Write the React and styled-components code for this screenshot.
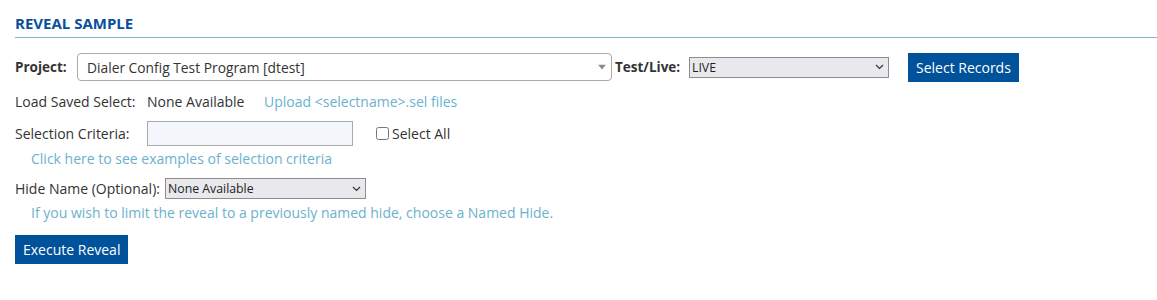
import React from 'react';
import styled, { createGlobalStyle } from 'styled-components';

const GlobalStyle = createGlobalStyle`
    body {
        margin: 0;
        background: #fff;
        font-family: "Open Sans", "Liberation Sans", sans-serif;
        color: #333;
    }
`;

const Page = styled.div`
    padding: 13px 0 0 15px;
    font-size: 14px;
`;

const Title = styled.h2`
    margin: 0;
    padding-bottom: 4px;
    border-bottom: 1px solid #7fb5cb;
    font-size: 15px;
    font-weight: 700;
    color: #0b4f9c;
    line-height: 20px;
`;

const Row = styled.div`
    display: flex;
    align-items: center;
    margin-top: ${(props) => props.top || 0}px;
    padding-left: ${(props) => props.indent || 0}px;
    height: ${(props) => props.h || 20}px;
`;

const Label = styled.span`
    font-weight: ${(props) => (props.bold ? 700 : 400)};
    font-size: ${(props) => (props.bold ? '13.5px' : 'inherit')};
    width: ${(props) => (props.width ? props.width + 'px' : 'auto')};
    flex-shrink: 0;
    white-space: nowrap;
`;

const Link = styled.a`
    color: #6cb1cd;
    text-decoration: none;
    cursor: pointer;
    white-space: nowrap;
`;

const SelectWrap = styled.div`
    position: relative;
    width: ${(props) => props.width}px;
    height: ${(props) => props.height}px;
    margin-left: ${(props) => props.left || 0}px;
    flex-shrink: 0;
`;

const BigSelect = styled.select`
    appearance: none;
    width: 100%;
    height: 100%;
    box-sizing: border-box;
    border: 1px solid #aaa;
    border-radius: 4px;
    background: #fff;
    font-family: inherit;
    font-size: 13.8px;
    color: #333;
    padding: 0 0 0 9px;
`;

const SmallSelect = styled.select`
    appearance: none;
    width: 100%;
    height: 100%;
    box-sizing: border-box;
    border: 1px solid #8d8d8d;
    border-radius: 0;
    background: #e9e9ed;
    font-family: inherit;
    font-size: 12.3px;
    color: #222;
    padding: 0 0 0 2px;
`;

const Arrow = styled.span`
    position: absolute;
    right: ${(props) => props.right}px;
    top: 50%;
    transform: translateY(-50%);
    display: flex;
    pointer-events: none;
`;

const Button = styled.button`
    background: #00529b;
    color: #fff;
    border: none;
    font-family: inherit;
    font-size: 14px;
    height: 29px;
    padding: 0 8px;
    margin-left: ${(props) => props.left || 0}px;
    cursor: pointer;
`;

const TextInput = styled.input`
    width: 206px;
    height: 25px;
    box-sizing: border-box;
    border: 1px solid #aaa;
    background: #f3f7fb;
    margin: 0;
`;

const CheckLabel = styled.label`
    display: flex;
    align-items: center;
    margin-left: 23px;
    gap: 3px;
`;

const Check = styled.input`
    width: 13px;
    height: 13px;
    margin: 0;
`;

const Caret = () => (
    <svg width="8" height="5" viewBox="0 0 8 5"><path d="M0 0h8L4 5z" fill="#888" /></svg>
);

const Chevron = () => (
    <svg width="9" height="6" viewBox="0 0 9 6"><path d="M1 1l3.5 3.5L8 1" fill="none" stroke="#333" strokeWidth="1.2" /></svg>
);

export default function App() {
    return (
        <Page>
            <GlobalStyle />
            <Title>REVEAL SAMPLE</Title>
            <Row top={15} h={28}>
                <Label bold width={62}>Project:</Label>
                <SelectWrap width={535} height={28}>
                    <BigSelect defaultValue="dtest">
                        <option value="dtest">Dialer Config Test Program [dtest]</option>
                    </BigSelect>
                    <Arrow right={6}><Caret /></Arrow>
                </SelectWrap>
                <Label bold width={74} style={{ marginLeft: 3 }}>Test/Live:</Label>
                <SelectWrap width={200} height={21}>
                    <SmallSelect defaultValue="live">
                        <option value="live">LIVE</option>
                    </SmallSelect>
                    <Arrow right={5}><Chevron /></Arrow>
                </SelectWrap>
                <Button left={19}>Select Records</Button>
            </Row>
            <Row top={10} h={20}>
                <Label width={132}>Load Saved Select:</Label>
                <Label width={117}>None Available</Label>
                <Link>Upload &lt;selectname&gt;.sel files</Link>
            </Row>
            <Row top={9} h={26}>
                <Label width={132}>Selection Criteria:</Label>
                <TextInput type="text" />
                <CheckLabel>
                    <Check type="checkbox" />
                    Select All
                </CheckLabel>
            </Row>
            <Row top={2} h={20} indent={16}>
                <Link>Click here to see examples of selection criteria</Link>
            </Row>
            <Row top={10} h={21}>
                <Label width={150}>Hide Name (Optional):</Label>
                <SelectWrap width={201} height={21}>
                    <SmallSelect defaultValue="none">
                        <option value="none">None Available</option>
                    </SmallSelect>
                    <Arrow right={5}><Chevron /></Arrow>
                </SelectWrap>
            </Row>
            <Row top={3} h={20} indent={16}>
                <Link>If you wish to limit the reveal to a previously named hide, choose a Named Hide.</Link>
            </Row>
            <Row top={13} h={29}>
                <Button>Execute Reveal</Button>
            </Row>
        </Page>
    );
}
